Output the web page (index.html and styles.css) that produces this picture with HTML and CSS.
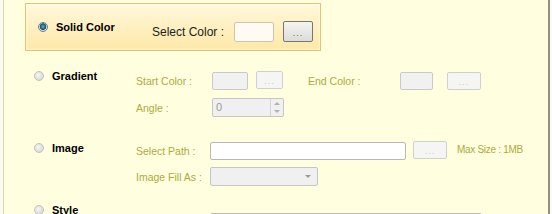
FILE: index.html
```html
<!DOCTYPE html>
<html>

<head>
    <meta charset="UTF-8">
    <title>Background Options</title>
    <link rel="stylesheet" href="styles.css">
</head>

<body>
    <div class="frame">

        <div class="selected">
            <span class="radio checked"></span>
            <span class="title">Solid Color</span>
            <div class="pick">
                <span class="pick-label">Select Color :</span>
                <span class="swatch"></span>
                <button class="dots">...</button>
            </div>
        </div>

        <div class="group gradient">
            <div class="head"><span class="radio"></span><span class="title">Gradient</span></div>
            <span class="field-label">Start Color :</span>
            <div class="controls">
                <span class="swatch off start"></span>
                <button class="dots off start-btn">...</button>
                <span class="field-label end">End Color :</span>
                <span class="swatch off end-box"></span>
                <button class="dots off end-btn">...</button>
            </div>
            <span class="field-label">Angle :</span>
            <div class="controls">
                <div class="spin">
                    <span class="spin-value">0</span>
                    <span class="arrows"><i class="up"></i><i class="down"></i></span>
                </div>
            </div>
        </div>

        <div class="group image">
            <div class="head"><span class="radio"></span><span class="title">Image</span></div>
            <span class="field-label">Select Path :</span>
            <div class="controls">
                <span class="text-box path"></span>
                <button class="dots off path-btn">...</button>
                <span class="field-label note">Max Size : 1MB</span>
            </div>
            <span class="field-label">Image Fill As :</span>
            <div class="controls">
                <div class="combo"><i class="down"></i></div>
            </div>
        </div>

        <div class="group style">
            <div class="head"><span class="radio"></span><span class="title">Style</span></div>
            <span></span>
            <div class="controls">
                <span class="text-box style-box"></span>
            </div>
        </div>

    </div>
</body>

</html>
```

FILE: styles.css
```css
html,
body {
    margin: 0;
    padding: 0;
}

body {
    font-family: "Liberation Sans", Arial, sans-serif;
    background: #fbfbee;
    overflow: hidden;
}

.frame {
    margin-left: 3px;
    width: 547px;
    height: 214px;
    overflow: hidden;
    box-sizing: border-box;
    background: #ffffe0;
    border-left: 1px solid #d6d6c6;
    border-right: 2px solid #8e8e8e;
    padding-top: 3px;
}

/* radio buttons */
.radio {
    display: inline-block;
    width: 10px;
    height: 10px;
    box-sizing: border-box;
    border-radius: 50%;
    border: 1px solid #c2c2bc;
    background: radial-gradient(circle at 40% 40%, #f8f8f8, #cdcdcd);
    flex-shrink: 0;
}

.radio.checked {
    border-color: #6d7f8c;
    background: radial-gradient(circle at 50% 45%, #5fb0d6 0, #2b6f91 2px, #1c4a62 3px, #d3dfe6 3.6px, #eef3f6 100%);
}

.title {
    font-size: 11px;
    font-weight: bold;
    color: #000;
}

/* selected option panel */
.selected {
    margin-left: 21px;
    width: 296px;
    height: 48px;
    box-sizing: border-box;
    border: 1px solid #e2c574;
    background: linear-gradient(#fff8db, #fde8a8);
    box-shadow: inset 0 0 3px rgba(255, 255, 255, 0.9);
    display: flex;
    align-items: center;
    padding-left: 12px;
}

.selected .radio {
    margin-right: 8px;
}

.selected .title {
    width: 96px;
}

.pick {
    display: flex;
    align-items: center;
    margin-top: 9px;
}

.pick-label {
    width: 82px;
    font-size: 12px;
    color: #222;
}

.swatch {
    display: block;
    width: 40px;
    height: 20px;
    box-sizing: border-box;
    border: 1px solid #cfc6b0;
    border-radius: 2px;
    background: #fffaf2;
}

.dots {
    display: block;
    margin: 0 0 0 9px;
    padding: 0 0 3px;
    width: 30px;
    height: 21px;
    box-sizing: border-box;
    border: 1px solid #767676;
    border-radius: 2px;
    background: linear-gradient(#f4f4f2, #dcdcd8);
    font-family: "Liberation Sans", Arial, sans-serif;
    font-size: 9px;
    letter-spacing: 1px;
    color: #666;
    line-height: 1;
    display: flex;
    align-items: flex-end;
    justify-content: center;
}

/* the other options */
.group {
    display: grid;
    grid-template-columns: 102px 74px 1fr;
    grid-auto-rows: 19px;
    row-gap: 7px;
    padding-left: 30px;
}

.gradient {
    margin-top: 20px;
    row-gap: 8px;
}

.image {
    margin-top: 24px;
}

.style {
    margin-top: 19px;
}

.head {
    grid-row: span 2;
    align-self: start;
    display: flex;
    align-items: center;
    height: 10px;
}

.image .head {
    margin-top: 2px;
}

.head .radio {
    margin-right: 8px;
}

.field-label {
    align-self: center;
    font-size: 10.5px;
    color: #adaa3a;
    white-space: nowrap;
}

.controls {
    display: flex;
    align-items: center;
}

.gradient .controls {
    margin-left: 2px;
}

.swatch.off {
    height: 18px;
    border-color: #c9c9c9;
    background: #f1f1f1;
}

.swatch.start {
    width: 36px;
}

.swatch.end-box {
    width: 33px;
}

.dots.off {
    height: 18px;
    border-color: #d0d0d0;
    background: #f5f5f3;
    color: #c4c4c4;
    padding-bottom: 2px;
}

.dots.start-btn {
    width: 27px;
    margin-left: 8px;
    margin-top: -2px;
}

.field-label.end {
    width: 92px;
    margin-left: 25px;
}

.dots.end-btn {
    width: 34px;
    margin-left: 14px;
}

.spin {
    width: 72px;
    height: 19px;
    box-sizing: border-box;
    border: 1px solid #c6c6c6;
    border-radius: 2px;
    background: #f0f0f0;
    display: flex;
}

.spin-value {
    flex: 1;
    font-size: 11px;
    color: #9a9a9a;
    padding-left: 3px;
    line-height: 17px;
}

.arrows {
    width: 12px;
    border-left: 1px solid #d4d4d4;
    display: flex;
    flex-direction: column;
    align-items: center;
    justify-content: space-around;
}

.up,
.down {
    display: block;
    width: 0;
    height: 0;
    border-left: 3px solid transparent;
    border-right: 3px solid transparent;
}

.up {
    border-bottom: 3px solid #b0b0b0;
}

.down {
    border-top: 3px solid #b0b0b0;
}

.text-box {
    display: block;
    height: 18px;
    box-sizing: border-box;
    border: 1px solid #b9b9b9;
    border-radius: 2px;
    background: #fff;
}

.text-box.path {
    width: 196px;
}

.dots.path-btn {
    width: 34px;
    margin-left: 7px;
    margin-top: -2px;
}

.field-label.note {
    margin-left: 10px;
    margin-top: -3px;
    font-size: 10px;
    letter-spacing: -0.3px;
}

.combo {
    width: 108px;
    height: 19px;
    box-sizing: border-box;
    border: 1px solid #c6c6c6;
    border-radius: 2px;
    background: #f0f0f0;
    display: flex;
    align-items: center;
    justify-content: flex-end;
    padding-right: 6px;
}

.combo .down {
    border-top-color: #999;
}

.style-box {
    width: 272px;
    margin-top: 14px;
}
```
